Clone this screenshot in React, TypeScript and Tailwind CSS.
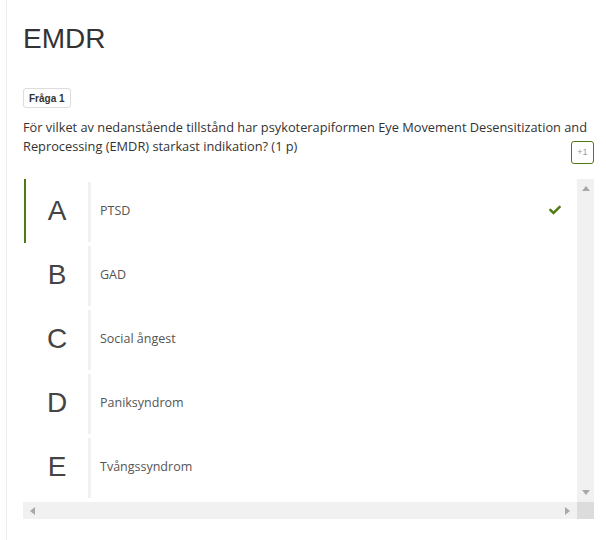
import React from "react";
import { FaCheck } from "react-icons/fa";

const options = [
  { letter: "A", text: "PTSD", correct: true },
  { letter: "B", text: "GAD", correct: false },
  { letter: "C", text: "Social ångest", correct: false },
  { letter: "D", text: "Paniksyndrom", correct: false },
  { letter: "E", text: "Tvångssyndrom", correct: false },
];

export default function App() {
  return (
    <div className="w-[606px] h-[540px] bg-white overflow-hidden">
      <div className="ml-[6px] h-[540px] border-l border-[#ececec] pl-[16px] pr-[12px] pt-[23px]">
        <h1
          className="text-[28px] leading-[32px] text-[#333333]"
          style={{ fontFamily: '"Liberation Sans", Arial, sans-serif' }}
        >
          EMDR
        </h1>

        <div className="mt-[33px] flex">
          <span
            className="h-[20px] px-[5px] border border-[#dddddd] rounded-[3px] text-[10px] font-bold text-[#333333] flex items-center"
            style={{ fontFamily: '"Liberation Sans", Arial, sans-serif' }}
          >
            Fråga 1
          </span>
        </div>

        <p
          className="mt-[10px] text-[12.8px] leading-[19px] text-[#333333] whitespace-nowrap"
          style={{ fontFamily: '"Open Sans", sans-serif' }}
        >
          För vilket av nedanstående tillstånd har psykoterapiformen Eye Movement Desensitization and
          <br />
          Reprocessing (EMDR) starkast indikation? (1 p)
        </p>
        <div className="flex justify-end -mt-[15px]">
          <span
            className="w-[23px] h-[23px] border border-[#4f7a12] rounded-[3px] flex items-center justify-center text-[9px] text-[#9a9a9a]"
            style={{ fontFamily: '"Liberation Sans", Arial, sans-serif' }}
          >
            +1
          </span>
        </div>

        <div className="mt-[15px] w-[571px] flex flex-col">
          <div className="flex h-[323px]">
            <div className="flex-1 flex flex-col">
              {options.map((o) => (
                <div
                  key={o.letter}
                  className={
                    "h-[64px] flex ml-[1px] border-l-2 " +
                    (o.correct ? "border-[#4f7a12]" : "border-transparent")
                  }
                >
                  <div
                    className="w-[62px] flex items-center justify-center text-[28px] text-[#444444]"
                    style={{ fontFamily: '"Liberation Sans", Arial, sans-serif' }}
                  >
                    {o.letter}
                  </div>
                  <div className="w-[3px] bg-[#f1f1f1] mt-[3px] mb-[1px]" />
                  <div
                    className="flex-1 flex items-center pl-[9px] text-[12.5px] text-[#555555]"
                    style={{ fontFamily: '"Open Sans", sans-serif' }}
                  >
                    {o.text}
                  </div>
                  {o.correct && (
                    <div className="w-[28px] flex items-center justify-start pb-[3px]">
                      <FaCheck className="text-[#4f7a12] w-[12px] h-[12px]" />
                    </div>
                  )}
                </div>
              ))}
            </div>
            <div className="w-[17px] bg-[#f1f1f1] flex flex-col justify-between items-center py-[7px]">
              <svg width="8" height="5" viewBox="0 0 8 5">
                <polygon points="4,0 8,5 0,5" fill="#a8a8a8" />
              </svg>
              <svg width="8" height="5" viewBox="0 0 8 5">
                <polygon points="0,0 8,0 4,5" fill="#a8a8a8" />
              </svg>
            </div>
          </div>
          <div className="flex h-[17px]">
            <div className="flex-1 bg-[#f1f1f1] flex items-center justify-between px-[7px]">
              <svg width="5" height="8" viewBox="0 0 5 8">
                <polygon points="5,0 5,8 0,4" fill="#a8a8a8" />
              </svg>
              <svg width="5" height="8" viewBox="0 0 5 8">
                <polygon points="0,0 5,4 0,8" fill="#a8a8a8" />
              </svg>
            </div>
            <div className="w-[17px] bg-[#dcdcdc]" />
          </div>
        </div>
      </div>
    </div>
  );
}
